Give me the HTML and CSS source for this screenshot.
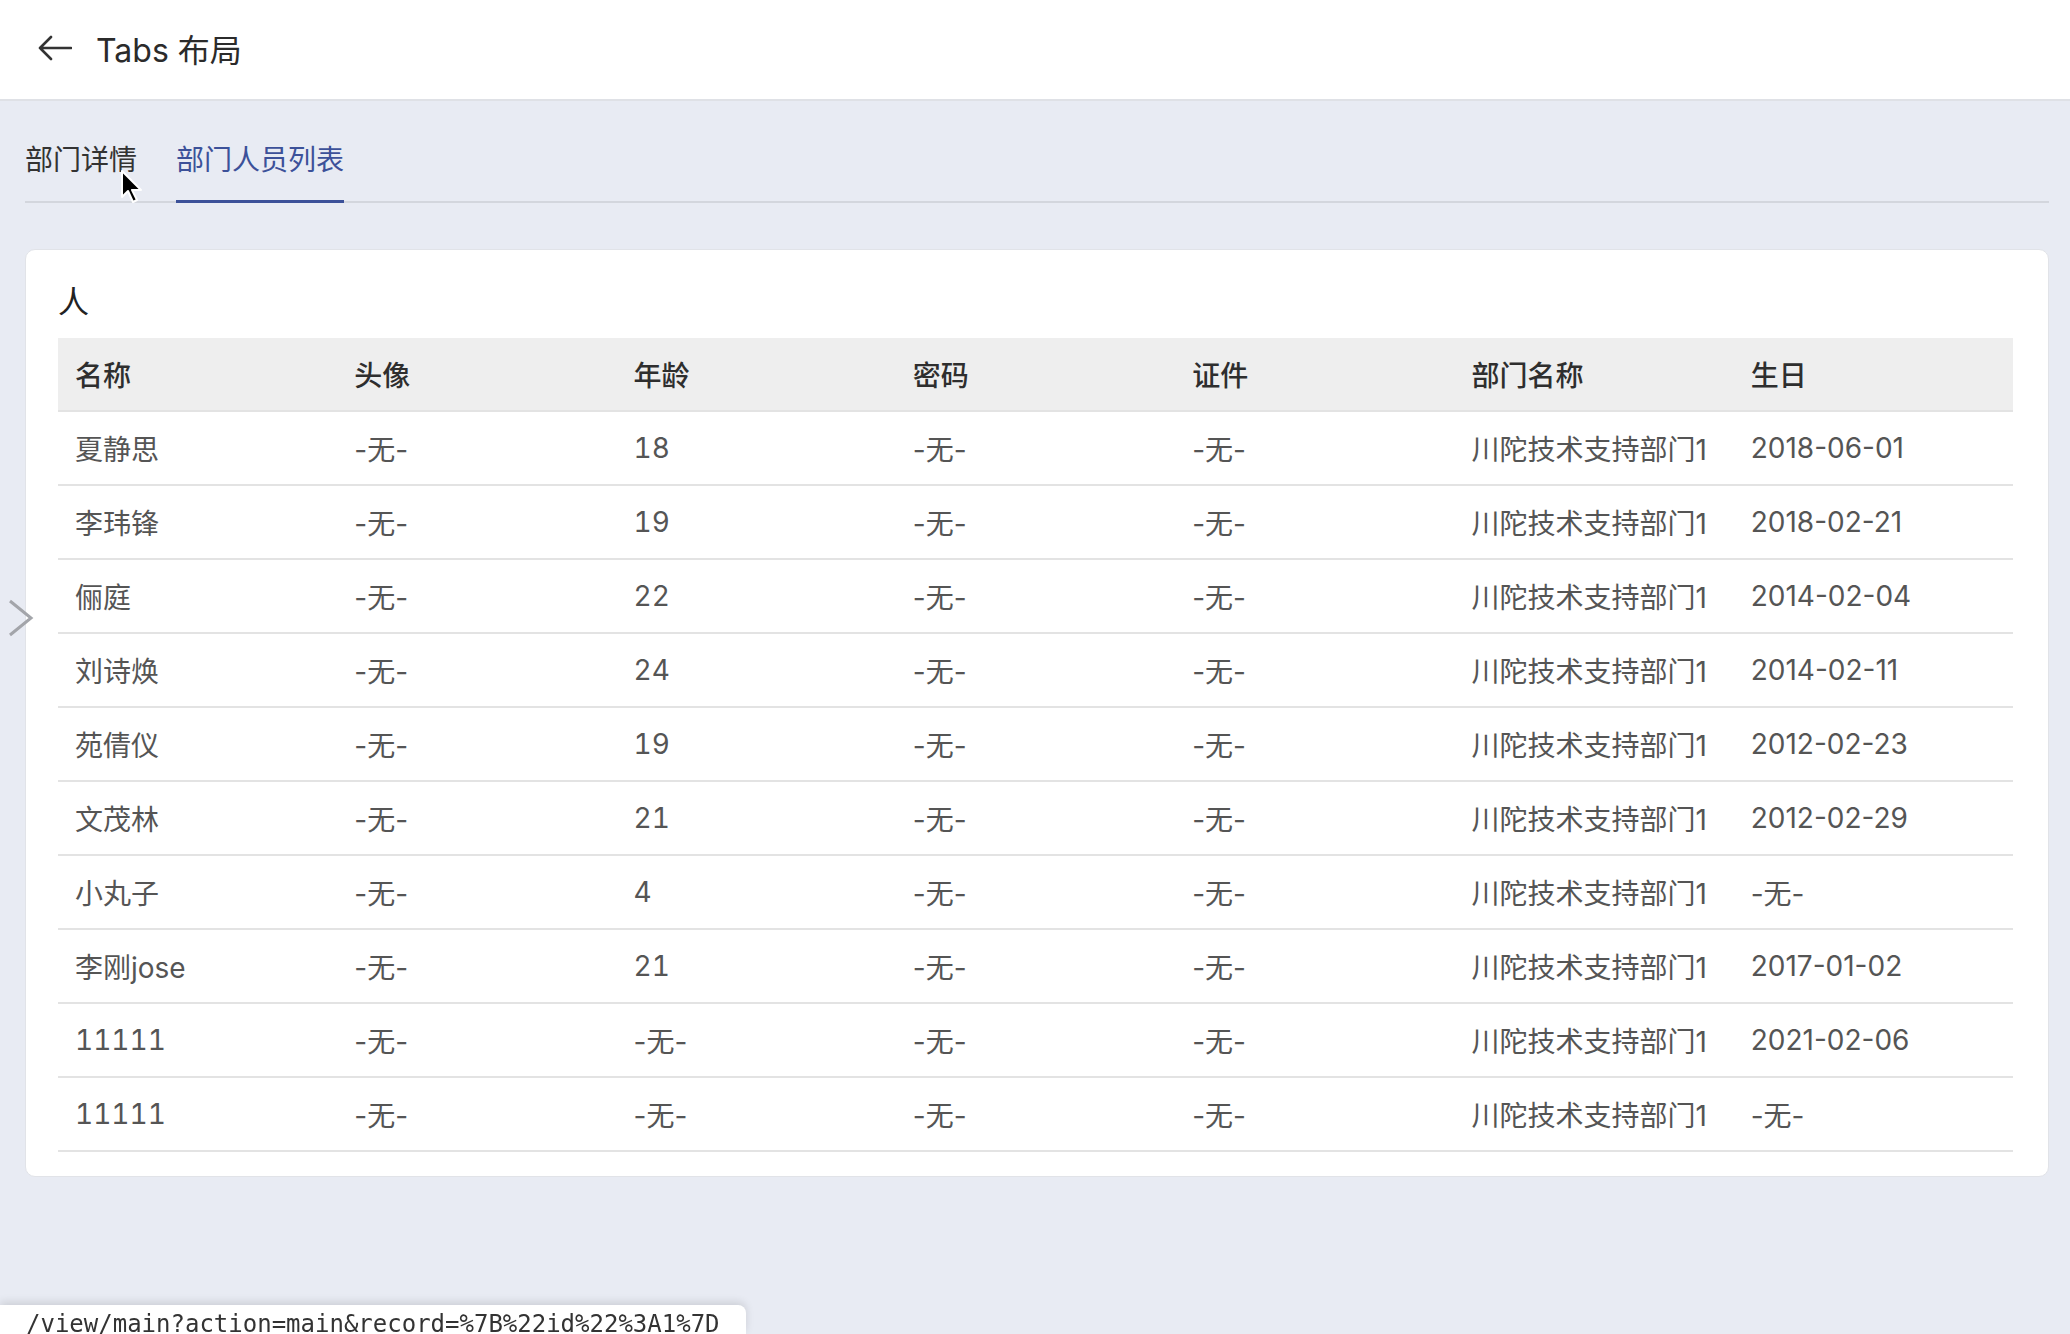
FILE: index.html
```html
<!DOCTYPE html>
<html lang="zh-CN">
<head>
    <meta charset="UTF-8">
    <meta name="viewport" content="width=device-width, initial-scale=1.0">
    <title>Tabs 布局</title>
    <link rel="stylesheet" href="styles.css">
</head>
<body>
    <header class="topbar">
        <svg class="back" width="34" height="26" viewBox="0 0 34 26">
            <path d="M13 2 L2 13 L13 24 M2 13 H33" fill="none" stroke="#333" stroke-width="2.6" stroke-linecap="round" stroke-linejoin="round"/>
        </svg>
        <span class="title">Tabs 布局</span>
    </header>

    <!-- sidebar toggle -->
    <svg class="side-toggle" width="28" height="40" viewBox="0 0 28 40">
        <path d="M3 3 L24 20 L3 37" fill="none" stroke="#a3a5aa" stroke-width="3"/>
    </svg>

    <main class="main">
        <div class="tabs">
            <div class="tab">部门详情</div>
            <div class="tab active">部门人员列表</div>
        </div>

        <div class="card">
            <div class="card-title">人</div>
            <table>
                <thead>
                    <tr>
                        <th>名称</th>
                        <th>头像</th>
                        <th>年龄</th>
                        <th>密码</th>
                        <th>证件</th>
                        <th>部门名称</th>
                        <th>生日</th>
                    </tr>
                </thead>
                <tbody>
                    <tr><td>夏静思</td><td>-无-</td><td class="num">18</td><td>-无-</td><td>-无-</td><td>川陀技术支持部门1</td><td>2018-06-01</td></tr>
                    <tr><td>李玮锋</td><td>-无-</td><td class="num">19</td><td>-无-</td><td>-无-</td><td>川陀技术支持部门1</td><td>2018-02-21</td></tr>
                    <tr><td>俪庭</td><td>-无-</td><td class="num">22</td><td>-无-</td><td>-无-</td><td>川陀技术支持部门1</td><td>2014-02-04</td></tr>
                    <tr><td>刘诗焕</td><td>-无-</td><td class="num">24</td><td>-无-</td><td>-无-</td><td>川陀技术支持部门1</td><td>2014-02-11</td></tr>
                    <tr><td>苑倩仪</td><td>-无-</td><td class="num">19</td><td>-无-</td><td>-无-</td><td>川陀技术支持部门1</td><td>2012-02-23</td></tr>
                    <tr><td>文茂林</td><td>-无-</td><td class="num">21</td><td>-无-</td><td>-无-</td><td>川陀技术支持部门1</td><td>2012-02-29</td></tr>
                    <tr><td>小丸子</td><td>-无-</td><td class="num">4</td><td>-无-</td><td>-无-</td><td>川陀技术支持部门1</td><td>-无-</td></tr>
                    <tr><td>李刚jose</td><td>-无-</td><td class="num">21</td><td>-无-</td><td>-无-</td><td>川陀技术支持部门1</td><td>2017-01-02</td></tr>
                    <tr><td class="num">11111</td><td>-无-</td><td>-无-</td><td>-无-</td><td>-无-</td><td>川陀技术支持部门1</td><td>2021-02-06</td></tr>
                    <tr><td class="num">11111</td><td>-无-</td><td>-无-</td><td>-无-</td><td>-无-</td><td>川陀技术支持部门1</td><td>-无-</td></tr>
                </tbody>
            </table>
        </div>
    </main>

    <!-- mouse pointer -->
    <svg class="pointer" width="26" height="36" viewBox="0 0 26 36">
        <path d="M2 2 L2 28 L8 22 L13 33 L17 31 L12 21 L21 21 Z" fill="#000" stroke="#fff" stroke-width="2" stroke-linejoin="round"/>
    </svg>

    <div class="status">/view/main?action=main&amp;record=%7B%22id%22%3A1%7D</div>
</body>
</html>
```

FILE: styles.css
```css
body {
    margin: 0;
    background-color: #e8ebf3;
    font-family: Inter, "Noto Sans CJK SC", sans-serif;
    color: #333;
    min-height: 100vh;
}

.topbar {
    height: 96px;
    padding-bottom: 3px;
    background-color: #fff;
    border-bottom: 2px solid #dfe1e6;
    display: flex;
    align-items: center;
    padding-left: 38px;
}

.title {
    font-size: 32px;
    margin-left: 24px;
    color: #2b2b2b;
}

.side-toggle {
    position: absolute;
    left: 7px;
    top: 598px;
}

.pointer {
    position: absolute;
    left: 120px;
    top: 169px;
}

.main {
    padding: 39px 21px 0 25px;
}

.tabs {
    display: flex;
    gap: 39px;
    box-shadow: inset 0 -2px 0 #d3d6dd;
}

.tab {
    font-size: 28px;
    line-height: 40px;
    padding-bottom: 20px;
    border-bottom: 3px solid transparent;
    color: #333;
}

.tab.active {
    color: #3c5199;
    border-bottom-color: #3c5199;
}

.card {
    margin-top: 46px;
    background-color: #fff;
    border: 1px solid #e1e3e8;
    border-radius: 10px;
    padding: 31px 35px 24px 32px;
}

.card-title {
    font-size: 31px;
    line-height: 42px;
    margin-bottom: 15px;
    color: #222;
}

table {
    width: 100%;
    border-collapse: collapse;
    table-layout: fixed;
}

th, td {
    height: 72px;
    padding: 0 0 0 17px;
    text-align: left;
    font-size: 28px;
    border-bottom: 2px solid #e3e3e3;
    white-space: nowrap;
}

th {
    background-color: #eeeeee;
    font-weight: 500;
    color: #2e2e2e;
}

td {
    color: #555;
}

td.num {
    font-variant-numeric: tabular-nums;
}

.status {
    position: fixed;
    left: 0;
    bottom: 0;
    width: 720px;
    height: 29px;
    padding-left: 26px;
    background-color: #fff;
    border-top-right-radius: 8px;
    box-shadow: 0 -3px 8px rgba(0, 0, 0, 0.12);
    font-family: "DejaVu Sans Mono", monospace;
    font-size: 24px;
    line-height: 38px;
    color: #333;
    overflow: hidden;
}
```
